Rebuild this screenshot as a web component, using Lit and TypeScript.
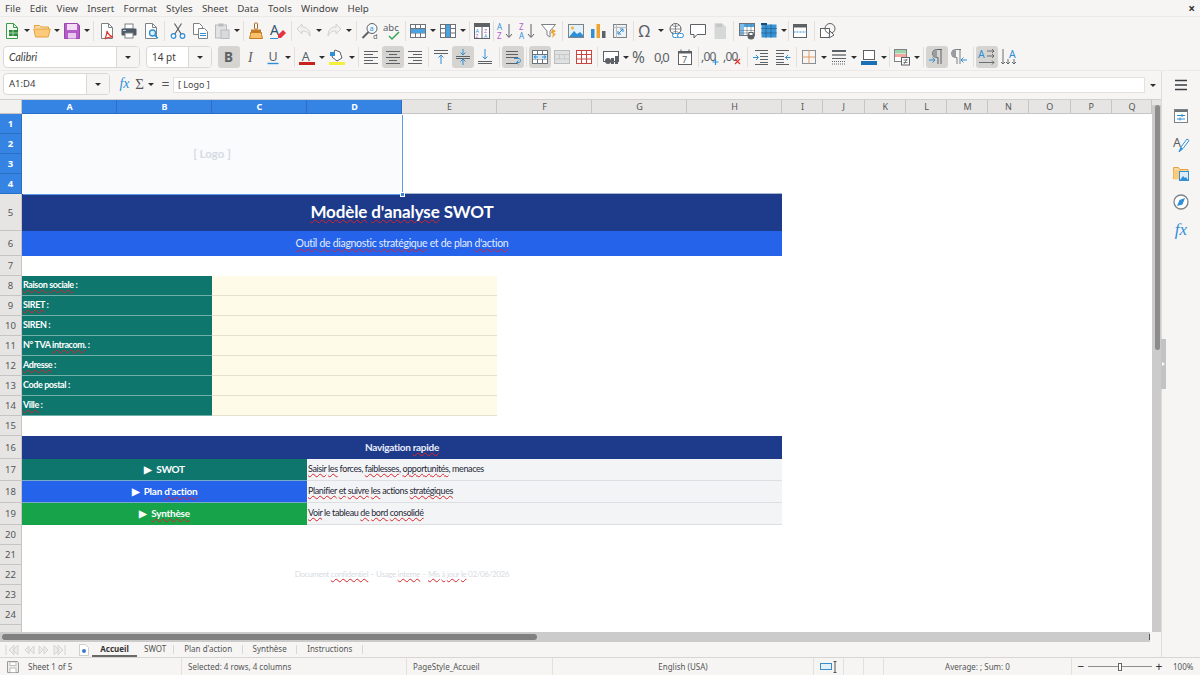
import { LitElement, css, html, svg, TemplateResult } from "lit";
import { customElement } from "lit/decorators.js";

const G = "#5c6166";
const B = "#2f8fd6";
const L = "#b9bcbf";
const doc = svg`<path d="M3.5 1.5h7l4 4v11h-11z" fill="#fff" stroke="#7d8286"/><path d="M10.5 1.5v4h4" fill="none" stroke="#7d8286"/>`;
const lines = (ys: number[], x1: number, x2: number, c = G) =>
  ys.map((y) => svg`<path d="M${x1} ${y}.5H${x2}" stroke=${c}/>`);
const tbl = (c: string, head = "#fff") => svg`<rect x="1.5" y="2.5" width="15" height="13" fill=${head} stroke=${c}/><path d="M1.5 6.5h15M1.5 11h15M6.5 2.5v13M11.5 2.5v13" stroke=${c} fill="none"/>`;

const icons: Record<string, TemplateResult> = {
  new: svg`<path d="M3.5 1.5h7l4 4v11h-11z" fill="#f3faf3" stroke="#3d9a4b"/><path d="M10.5 1.5v4h4" fill="none" stroke="#3d9a4b"/><rect x="6" y="8" width="9" height="6" fill="#2e8b3d"/><path d="M6 11h9M10 8v6" stroke="#bfe3c4" stroke-width=".8"/>`,
  open: svg`<path d="M1.5 6V3.5h5L8 5h7.5v2" fill="#fcd9a0" stroke="#e5a33c"/><path d="M.8 7h16.4l-2 8H2.5z" fill="#fdca7c" stroke="#e5a33c"/>`,
  save: svg`<path d="M1.5 1.5h13l2 2v13h-15z" fill="#b45cc8" stroke="#9a46ae"/><rect x="4" y="2" width="10" height="6" fill="#f2dcf6"/><rect x="5" y="11" width="8" height="5.5" fill="#e9c9ef"/>`,
  pdf: svg`${doc}<path d="M9 9c1 3 3 5 6 6-3 0-6 0-8 2 1-3 2-5 2-8z" fill="none" stroke="#e0362c" stroke-width="1.2"/>`,
  print: svg`<rect x="5" y="2" width="8" height="5" fill="#fff" stroke="#7d8286"/><rect x="1.5" y="6.5" width="15" height="7" rx="1" fill="#4f5b66"/><rect x="5" y="11" width="8" height="5" fill="#fff" stroke="#7d8286"/><rect x="3" y="8" width="3" height="1" fill="#b7d6ee"/>`,
  preview: svg`${doc}<circle cx="10.5" cy="11" r="3" fill="#dff0fb" stroke=${B} stroke-width="1.3"/><path d="M12.8 13.2l3 3" stroke=${B} stroke-width="1.6"/>`,
  cut: svg`<circle cx="4.5" cy="14" r="2.3" fill="none" stroke=${B} stroke-width="1.2"/><circle cx="13.5" cy="14" r="2.3" fill="none" stroke=${B} stroke-width="1.2"/><path d="M5.8 12L12.5 1.5M12.2 12L5.5 1.5" stroke=${G} stroke-width="1.2" fill="none"/>`,
  copy: svg`<path d="M2.5 1.5h6l3 3v8h-9z" fill="#fff" stroke="#7d8286"/><path d="M7.5 6.5h6l3 3v7h-9z" fill="#fff" stroke="#7d8286"/>${lines([11, 13], 9, 15, B)}`,
  paste: svg`<rect x="2.5" y="3" width="11" height="13" fill="#e2e3e3" stroke=${L}/><rect x="5.5" y="1.5" width="5" height="3" fill=${L}/><rect x="8" y="8" width="8" height="8.5" fill="#d9dadb" stroke=${L}/>`,
  clone: svg`<rect x="7.5" y="1" width="3" height="6" rx="1" fill="#fff" stroke="#a5651d"/><path d="M4 7.5h10v3H4z" fill="#c47b26"/><path d="M3.5 10.5h11v2l1 4h-13l1-4z" fill="#f7c069" stroke="#c47b26"/>`,
  clear: svg`<text x="1" y="13" class="t" font-size="14" fill="#31556f">A</text><path d="M9 13l5-5 3 3-5 5H9z" fill="#e5333f"/><path d="M1 16.5h8" stroke=${B}/>`,
  undo: svg`<path d="M7 2L2 7l5 5V9c4 0 6 1 8 5 0-6-3-9-8-9z" fill="#f1f1f0" stroke="#cfd0d0"/>`,
  redo: svg`<path d="M11 2l5 5-5 5V9c-4 0-6 1-8 5 0-6 3-9 8-9z" fill="#f1f1f0" stroke="#cfd0d0"/>`,
  find: svg`<circle cx="11" cy="6.5" r="5" fill="#f4fafe" stroke=${G}/><path d="M7.5 10L1.5 16" stroke=${G} stroke-width="2"/><text x="8.6" y="9" class="t" font-size="7.5" fill=${B}>a</text><text x="12" y="17" class="t" font-size="7.500" fill=${G}>d</text>`,
  spell: svg`<text x="0" y="9" class="t" font-size="9.5" fill=${G}>abc</text><path d="M6 14l3 3 7-7" fill="none" stroke="#36a852" stroke-width="1.5"/>`,
  rows: svg`${tbl("#6c7278")}<rect x="2" y="7" width="14" height="4" fill="#4aa3e0"/>`,
  cols: svg`${tbl("#6c7278")}<rect x="7" y="3" width="4" height="12" fill="#4aa3e0"/>`,
  sort: svg`<rect x="1.5" y="1.5" width="15" height="15" fill="#fff" stroke=${G}/><rect x="2" y="2" width="14" height="3" fill=${G}/><path d="M9 2v14" stroke=${G}/><text x="2.500" y="10.500" class="t" font-size="5.500" fill=${B}>A</text><text x="2.500" y="15.500" class="t" font-size="5" fill="#b65ec9">Z</text><text x="11" y="10.500" class="t" font-size="5.500" fill="#b65ec9">Z</text><text x="11" y="15.500" class="t" font-size="5" fill=${B}>A</text>`,
  asc: svg`<text x="1" y="8" class="t" font-size="8" fill=${B}>A</text><text x="1" y="16.5" class="t" font-size="8" fill="#b65ec9">Z</text><path d="M13 2v13M10 12l3 3.5 3-3.5" fill="none" stroke=${G}/>`,
  desc: svg`<text x="1" y="8" class="t" font-size="8" fill="#b65ec9">Z</text><text x="1" y="16.5" class="t" font-size="8" fill=${B}>A</text><path d="M13 2v13M10 12l3 3.5 3-3.5" fill="none" stroke=${G}/>`,
  filter: svg`<path d="M1.5 2.5h14L10 9v6l-3-2V9z" fill="#fff" stroke="#7d8286"/><path d="M12 7l4 2-3 2 3 1-4 4 1-4-2-1z" fill="#f0a22e"/>`,
  image: svg`<rect x="1.5" y="2.5" width="15" height="13" fill="#e2f0fa" stroke="#7d8286"/><circle cx="5.5" cy="6" r="1.5" fill="#f3b13c"/><path d="M2 15l5-6 3 3 3-2 3 3v2z" fill=${B}/>`,
  chart: svg`<rect x="2" y="7" width="3.5" height="9" fill=${B}/><rect x="7.5" y="2" width="3.5" height="14" fill="#f0a22e"/><rect x="13" y="9" width="3.5" height="7" fill=${G}/>`,
  pivot: svg`<rect x="2.5" y="2.5" width="13" height="13" fill="#eef1f3" stroke="#7d8286"/><path d="M2.5 5.5h13M5.5 2.5v13" stroke=${L}/><path d="M7 12l5-5M12 7h-3M12 7v3M7 12h3M7 12V9" stroke=${B} fill="none"/>`,
  omega: svg`<text x="1.500" y="15" class="t" font-size="16" fill=${G}>Ω</text>`,
  link: svg`<circle cx="8.5" cy="7" r="5.5" fill="#fff" stroke=${G}/><path d="M3 7h11M8.5 1.5v11M5 3c2 2 5 2 7 0M5 11c2-2 5-2 7 0" stroke=${G} stroke-width=".7" fill="none"/><rect x="5.5" y="11.5" width="6" height="4" rx="2" fill="#fff" stroke=${B}/><rect x="10.5" y="11.5" width="6" height="4" rx="2" fill="#fff" stroke=${B}/>`,
  comment: svg`<path d="M1.5 2.5h15v10H8l-3 3.5v-3.5H1.5z" fill="#fff" stroke=${G}/>`,
  headers: svg`<path d="M4 1.5h7l3.5 3.5v11.5H4z" fill="#d6d7d7" stroke="#d6d7d7"/><rect x="5" y="2" width="6" height="3" fill="#c4c5c5"/>`,
  freeze: svg`<rect x="1.5" y="1.5" width="15" height="12" fill="#fff" stroke="#6c7278"/><rect x="2" y="2" width="14" height="3" fill="#4aa3e0"/><rect x="2" y="2" width="4" height="11" fill="#7fbde8"/><path d="M2 8.5h14M2 11h14M9 2v11M13 2v11" stroke="#6c7278" stroke-width=".6"/><circle cx="13" cy="14" r="3.500" fill=${G}/><rect x="11" y="10.500" width="4" height="3" fill="#fff" stroke=${G}/>`,
  split: svg`<rect x="1.5" y="2.5" width="15" height="13" fill="#3b93d3"/><path d="M1.5 6.5h15M1.5 11h15M6 2.5v13M11 2.5v13" stroke="#174f78" stroke-dasharray="1 1"/><rect x="1" y="1" width="6" height="2" fill="#174f78"/>`,
  pane: svg`<rect x="2.5" y="2.5" width="13" height="13" fill="#fff" stroke=${G}/><rect x="3" y="3" width="12" height="2.5" fill=${G}/><path d="M2.5 10h13" stroke=${B} stroke-dasharray="2 1"/>`,
  shapes: svg`<rect x="1.5" y="6.5" width="9" height="9" fill="#fff" stroke=${G}/><circle cx="11" cy="6.5" r="5" fill="none" stroke=${G}/><path d="M11 9l4 4-5 3z" fill="#fff" stroke=${G}/>`,
  bold: svg`<text x="4" y="14" class="t" font-size="13.500" font-weight="700" fill=${G}>B</text>`,
  italic: svg`<text x="6" y="14" class="s" font-size="14" font-style="italic" fill=${G}>I</text>`,
  under: svg`<text x="4.5" y="13" class="t" font-size="12.500" fill=${G}>U</text><path d="M3.5 15.5h11" stroke=${B} stroke-width="1.4"/>`,
  fcolor: svg`<text x="3.8" y="12.5" class="t" font-size="12.500" fill=${G}>A</text><rect x="1" y="14" width="16" height="3" fill="#c9211e"/>`,
  hcolor: svg`<rect x="1" y="14" width="16" height="3" fill="#f5ee3d"/><path d="M7 2l5 2 2 6-5 3-5-4z" fill="#fff" stroke=${G}/><rect x="2" y="4" width="5" height="4" fill=${B}/>`,
  left: svg`${lines([3, 9, 15], 2, 16)}${lines([6, 12], 2, 11)}`,
  center: svg`${lines([3, 9, 15], 2, 16)}${lines([6, 12], 5, 13)}`,
  right: svg`${lines([3, 9, 15], 2, 16)}${lines([6, 12], 7, 16)}`,
  vtop: svg`${lines([2, 5], 2, 16)}<path d="M9 16V7M6.5 9.5L9 7l2.5 2.5" fill="none" stroke=${B}/>`,
  vmid: svg`${lines([8, 10], 2, 16)}<path d="M9 1v6M6.5 4.5L9 7l2.5-2.5M9 17v-6M6.5 13.5L9 11l2.5 2.5" fill="none" stroke=${B}/>`,
  vbot: svg`${lines([13, 15], 2, 16)}<path d="M9 1v10M6.5 8.5L9 11l2.5-2.5" fill="none" stroke=${B}/>`,
  wrap: svg`${lines([3, 6, 9, 15], 2, 14)}<path d="M10 10.5h5c2 0 2 4 0 4h-2M14.5 12.5L12.5 14.5l2 2" fill="none" stroke=${B}/>`,
  merge: svg`${tbl("#6c7278")}<rect x="2" y="7" width="14" height="4" fill="#cfe6f7"/><path d="M3 9h4M15 9h-4M5 7.5L3 9l2 1.5M13 7.5l2 1.5-2 1.5" fill="none" stroke=${B}/>`,
  mergeOff: svg`<rect x="1.5" y="2.5" width="15" height="13" fill="#e0e1e1" stroke=${L}/><path d="M1.5 6.5h15M1.5 11h15M6.5 6.5v4.5M11.5 6.5v4.5" stroke="#c8c9c9"/>`,
  split2: svg`${tbl("#c9453f")}`,
  numfmt: svg`<rect x="1.5" y="3.5" width="15" height="10" fill="#fff" stroke=${G}/><circle cx="6" cy="13" r="3" fill=${G}/><rect x="9" y="10" width="3" height="6" fill=${G}/><rect x="13" y="8" width="3" height="8" fill=${G}/>`,
  percent: svg`<text x="0" y="15" class="t" font-size="15.500" fill=${G}>%</text>`,
  dec: svg`<text x="0" y="14" class="t" font-size="13" letter-spacing="-1.300" fill=${G}>0,0</text>`,
  date: svg`<rect x="2.5" y="3.5" width="13" height="13" fill="#fff" stroke=${G}/><rect x="2.5" y="3.5" width="13" height="2" fill=${G}/><path d="M5 1.5v3M13 1.5v3" stroke=${G}/><text x="6" y="15" class="t" font-size="9" fill=${G}>7</text>`,
  addd: svg`<text x="-1" y="13" class="t" font-size="12" letter-spacing="-.800" fill=${G}>,00</text><path d="M13.5 11v6M10.5 14h6" stroke=${B} stroke-width="1.2"/>`,
  deld: svg`<text x="-1" y="13" class="t" font-size="12" letter-spacing="-.800" fill=${G}>,00</text><path d="M11 11l5 5M16 11l-5 5" stroke="#e0362c" stroke-width="1.2"/>`,
  indent: svg`${lines([2, 16], 3, 16)}${lines([5, 8, 11, 14], 8, 16)}<path d="M1 9.5h5M4 7l2.5 2.5L4 12" fill="none" stroke=${B}/>`,
  outdent: svg`${lines([2, 16], 2, 15)}${lines([5, 8, 11, 14], 2, 10)}<path d="M16.5 9.5h-5M14 7l-2.5 2.5L14 12" fill="none" stroke=${B}/>`,
  border: svg`<rect x="2.5" y="2.5" width="13" height="13" fill="none" stroke="#8a8f93"/><path d="M9 2.5v13M2.5 9h13" stroke="#e39a60"/>`,
  lstyle: svg`<path d="M2 3h14" stroke=${G} stroke-width="2"/><path d="M2 7h14" stroke=${G} stroke-width="1.3"/><path d="M2 10.5h14" stroke=${G}/><path d="M2 13.5h14M2 16h14" stroke=${G} stroke-dasharray="1 1"/>`,
  bcolor: svg`<rect x="3.5" y="2.5" width="11" height="9" fill="#fff" stroke=${G}/><rect x="1" y="13" width="16" height="4" fill="#1b6fb5"/>`,
  cond: svg`<rect x="1.5" y="1.5" width="12" height="12" fill="#fff" stroke="#7d8286"/><rect x="2" y="2" width="11" height="3.5" fill="#9ed4aa"/><rect x="2" y="6" width="11" height="3" fill="#f3a79f"/><rect x="8.5" y="9.5" width="8" height="7.5" fill="#fff" stroke=${G}/><path d="M10.5 12h4M10.5 14.5h4M14 11l-3 5" stroke=${G} stroke-width=".8"/>`,
  ltr: svg`<path d="M14 1.5H8.5a4 4 0 000 8H10V16M13 1.5V16" fill="none" stroke=${G}/><path d="M9 1.5a4 4 0 000 8" fill="#9a9da0"/><path d="M1 12h6M4.5 9.5L7 12l-2.500 2.500" fill="none" stroke=${B}/>`,
  rtl: svg`<path d="M11 1.5H5.5a4 4 0 000 8H7V16M10 1.5V16" fill="none" stroke="#7b7e81"/><path d="M6 1.5a4 4 0 000 8" fill="#9a9da0"/><path d="M17 12h-6M13.5 9.5L11 12l2.500 2.500" fill="none" stroke=${B}/>`,
  horiz: svg`<text x="0" y="9.5" class="t" font-size="10.500" fill=${B}>A</text><path d="M9 3h7M14 1l2 2-2 2M9 8h7M14 6l2 2-2 2M1 14.5h15M14 12.5l2 2-2 2" fill="none" stroke=${G} stroke-width=".9"/>`,
  vert: svg`<text x="9" y="10" class="t" font-size="10.500" fill=${B}>A</text><path d="M3 1v15M1 14l2 2 2-2M8 11v5M6 14l2 2 2-2M14 11v5M12 14l2 2 2-2" fill="none" stroke=${G} stroke-width=".9"/>`,
  menu: svg`<path d="M3 4.5h12M3 9h12M3 13.5h12" stroke="#3a3e42" stroke-width="1.6"/>`,
  props: svg`<rect x="2.5" y="2.5" width="13" height="13" fill="#fff" stroke="#7d8286"/><rect x="3" y="3" width="12" height="2" fill="#6d7276"/><path d="M5 8.5h8M5 12h8" stroke=${B}/><path d="M10 7v3M8 10.5v3" stroke=${B}/>`,
  styles: svg`<text x="1" y="12" class="t" font-size="12.500" fill=${G}>A</text><path d="M7 17l2-5 6-8 2 1.5-6 8z" fill="#fff" stroke=${B}/><path d="M7 17l2-5 2 1.5z" fill=${B}/>`,
  gallery: svg`<path d="M1.5 15V3.5h5l1.5 2h8v2" fill="#fcd9a0" stroke="#e5a33c"/><rect x="1.5" y="6" width="9" height="9.5" fill="#fdca7c"/><rect x="7.5" y="7.5" width="9" height="9" fill="#dcedf9" stroke=${B}/><path d="M8 16l3-4 2 2 1-1 2 3z" fill=${B}/>`,
  nav: svg`<circle cx="9" cy="9" r="7" fill="#fff" stroke="#7d8286" stroke-width="1.3"/><path d="M13 5l-2.5 6.5L5 13l2.500-6z" fill=${B}/>`,
};

const ICON = (n: string, s = 18) => html`<svg width=${s} height=${s} viewBox="0 0 18 18">${icons[n]}</svg>`;

const TB1 = "new dd open dd save dd |5 pdf print preview |5 cut copy paste dd | clone clear | undo dd redo dd |6 find spell | rows dd cols dd | sort |1 asc desc filter |5 image chart pivot | omega dd link comment headers |5 freeze |0 split dd |1 pane |6 shapes".split(" ");
const TB2 = "bold* italic under dd | fcolor dd hcolor dd | left center* right | vtop vmid* vbot |6 wrap* |5 merge* mergeOff split2 |5 numfmt dd percent dec date | addd deld |6 indent outdent | border dd lstyle dd bcolor dd |3 cond dd |5 ltr* rtl |6 horiz* vert".split(" ");
const MENU = ["File", "Edit", "View", "Insert", "Format", "Styles", "Sheet", "Data", "Tools", "Window", "Help"];
const COLS = [..."ABCDEFGHIJKLMNOPQ"];
const HEIGHTS = [20, 20, 20, 20, 37, 25, 20, 20, 20, 20, 20, 20, 20, 20, 20, 23, 22, 22, 22, 20, 20, 20, 20, 20, 20];
const WIDTHS = [95, 95, 95, 95, 95, 95, 95, 95, 41, 41.500, 41.500, 41, 41, 41, 41.500, 41.500, 40];

type Cell = { span: number; cls: string; text?: string; rows?: number };
const field = (label: string): Cell[] => [
  { span: 2, cls: "label", text: label },
  { span: 3, cls: "input" },
];
const link = (cls: string, label: string, desc: string): Cell[] => [
  { span: 3, cls: `go ${cls}`, text: `▶  ${label}` },
  { span: 5, cls: "desc", text: desc },
];
// ~word~ gets the spell check underline
const ROWS: Record<number, Cell[]> = {
  1: [{ span: 4, rows: 4, cls: "logo", text: "[ Logo ]" }],
  5: [{ span: 8, cls: "title", text: "~Modèle~ ~d'analyse~ SWOT" }],
  6: [{ span: 8, cls: "sub", text: "~Outil~ ~de~ ~diagnostic~ ~stratégique~ et de plan ~d'action~" }],
  8: field("~Raison~ ~sociale~ :"),
  9: field("~SIRET~ :"),
  10: field("SIREN :"),
  11: field("N° TVA ~intracom.~ :"),
  12: field("~Adresse~ :"),
  13: field("Code postal :"),
  14: field("~Ville~ :"),
  16: [{ span: 8, cls: "nav", text: "Navigation ~rapide~" }],
  17: link("teal", "SWOT", "~Saisir~ ~les~ forces, ~faiblesses~, ~opportunités~, menaces"),
  18: link("blue", "Plan ~d'action~", "~Planifier~ ~et~ ~suivre~ ~les~ actions ~stratégiques~"),
  19: link("green", "~Synthèse~", "~Voir~ le tableau ~de~ ~bord~ ~consolidé~"),
  22: [{ span: 8, cls: "foot", text: "Document ~confidentiel~ – Usage ~interne~ – ~Mis~ ~à~ ~jour~ ~le~ 02/06/2026" }],
};
const TABS = ["Accueil", "SWOT", "Plan d'action", "Synthèse", "Instructions"];

const spell = (t = "") =>
  t.split(/(~[^~]+~)/).map((p) => (p.startsWith("~") ? html`<span class="w">${p.slice(1, -1)}</span>` : p));

@customElement("app-root")
export class AppRoot extends LitElement {
  static styles = css`
    :host {
      display: flex;
      flex-direction: column;
      width: 1200px;
      height: 675px;
      overflow: hidden;
      background: #f6f5f4;
      color: #3d3d3d;
      font-family: "Noto Sans", sans-serif;
      font-size: 10px;
    }
    svg { display: block; flex: none; overflow: visible; }
    svg .t { font-family: "Noto Sans", sans-serif; }
    svg .s { font-family: "Liberation Serif", serif; }

    .menubar { display: flex; height: 16px; align-items: center; padding-left: 5px; border-bottom: 1px solid #eceae8; }
    .menubar span { margin-right: 9.200px; font-size: 9.800px; color: #444; }
    .menubar .close { margin: 0 5px 0 auto; font-size: 12px; font-weight: 700; color: #333; }

    .tools { display: flex; align-items: center; height: 27px; padding-left: 1px; }
    .tools.second { height: 26px; padding-left: 3px; border-bottom: 1px solid #eceae8; }
    .btn { display: flex; align-items: center; justify-content: center; flex: none; width: 22px; height: 22px; border-radius: 3px; }
    .btn.on { background: #d6d4d1; }
    .dd { flex: none; width: 8px; display: flex; justify-content: center; }
    .dd::after, .arrow::after {
      content: "";
      border: 3px solid transparent;
      border-top: 3.500px solid #2e2e2e;
      border-bottom: 0;
    }
    .sep { flex: none; display: flex; justify-content: center; height: 20px; }
    .sep::after { content: ""; width: 1px; background: #e2e0dd; }

    .combo { display: flex; flex: none; height: 22px; box-sizing: border-box; background: #fff; border: 1px solid #dad8d5; border-radius: 4px; overflow: hidden; }
    .combo .val { flex: 1; padding-left: 5px; line-height: 20px; }
    .combo .arrow { width: 22px; flex: none; display: flex; align-items: center; justify-content: center; background: #f6f5f4; border-left: 1px solid #dad8d5; }
    .font { width: 137px; font-style: italic; }
    .font .val { font-family: "Lato", sans-serif; font-size: 10.500px; }
    .size { width: 66px; margin-left: 6px; margin-right: 6px; }

    .work { flex: 1; display: flex; min-height: 0; }
    .main { width: 1161px; display: flex; flex-direction: column; border-right: 1px solid #dedcd9; box-sizing: content-box; }
    .side { flex: 1; display: flex; flex-direction: column; align-items: center; padding-top: 5px; gap: 10.700px; position: relative; }
    .side .first { margin-bottom: 2px; }
    .grip { position: absolute; left: -1px; top: 268px; width: 5px; height: 50px; background: #c3c3c3; display: flex; align-items: center; }
    .grip::after { content: ""; border: 2px solid transparent; border-left: 3px solid #fff; border-right: 0; margin-left: 1px; }

    .formula { display: flex; align-items: center; height: 28px; padding: 0 0 2px 3px; box-sizing: border-box; flex: none; }
    .formula .name { width: 107px; }
    .formula .name .val { font-size: 9.500px; }
    .fbtn { flex: none; width: 15px; display: flex; justify-content: center; color: #555; }
    .fx { margin-left: 7px; font: italic 14px "Liberation Serif", serif; color: #2f8fd6; }
    .sigma { font: 15px "Liberation Serif", serif; }
    .eq { font-size: 14px; line-height: 14px; margin-left: 3px; }
    .finput { margin: 2px 0 0 0; width: 972px; height: 16px; box-sizing: border-box; background: #fff; border: 1px solid #e3e1de; font-size: 9px; line-height: 14px; padding-left: 4px; color: #444; }
    .fdrop { width: 15px; margin-top: 2px; }

    .sheetwrap { flex: none; display: flex; height: 533px; border-top: 1px solid #d0cfcd; box-sizing: border-box; background: #fff; }
    .sheet { position: relative; width: 1152px; overflow: hidden; display: grid; align-content: start; font-family: "Lato", sans-serif; }
    .corner, .ch, .rh { display: flex; align-items: center; justify-content: center; background: #e6e5e3; color: #555; font-family: "Noto Sans", sans-serif; font-size: 9px; box-sizing: border-box; border-right: 1px solid #c6c5c3; border-bottom: 1px solid #c6c5c3; }
    .corner { background: #f2f1ef; }
    .ch { padding-left: 1px; }
    .ch.sel, .rh.sel { background: #3584e4; color: #fff; font-weight: 700; border-color: #2a6fc4; }
    .rh { grid-column: 1; font-size: 9.500px; }
    .cell { display: flex; align-items: center; box-sizing: border-box; min-width: 0; white-space: pre; color: #fff; padding-bottom: 2px; }
    .w { text-decoration: underline wavy #d8232a 1px; text-underline-offset: 1px; text-decoration-skip-ink: none; }
    .logo { justify-content: center; background: #f9fbfd; color: #d5dbe3; font-weight: 700; font-size: 11.500px; box-shadow: 1px 1px 0 #5a9ae6; position: relative; z-index: 1; }
    .handle { position: absolute; right: -3px; bottom: -3px; width: 3px; height: 3px; background: #3584e4; border: 1px solid #fff; z-index: 2; }
    .title { justify-content: center; background: #1e3a8a; font-weight: 700; font-size: 17px; letter-spacing: -.12px; padding-bottom: 3px; box-shadow: 0 -1px 0 #a9b6cf; }
    .sub { justify-content: center; background: #2563eb; color: #e4edfd; font-size: 10.500px; letter-spacing: -.3px; }
    .label { background: #0f766e; font-weight: 700; font-size: 9px; letter-spacing: -.4px; padding-left: 1px; border-bottom: 1px solid #6fb0a9; }
    .input { background: #fefce8; border-bottom: 1px solid #e3e2cf; }
    .nav { justify-content: center; background: #1e3a8a; font-weight: 700; font-size: 10px; letter-spacing: -.28px; color: #eaeefa; }
    .go { justify-content: center; font-weight: 700; font-size: 10px; letter-spacing: -.25px; border-bottom: 1px solid #79a9c8; }
    .teal { background: #0f766e; }
    .blue { background: #2563eb; }
    .green { background: #16a34a; border-bottom: 0; }
    .desc { background: #f3f4f6; color: #1f2937; font-size: 9px; letter-spacing: -.4px; padding-left: 1px; border-bottom: 1px solid #dcdee1; }
    .foot { justify-content: center; color: #d8dce2; font-size: 8px; letter-spacing: -.33px; }

    .vscroll { width: 9px; flex: none; position: relative; background: #cbcbcb; }
    .vscroll::before { content: ""; position: absolute; top: 0; left: 0; right: 0; height: 5px; background: #e6e5e3; }
    .vscroll::after { content: ""; position: absolute; top: 5px; left: 3px; width: 5px; height: 245px; background: #8c8c8c; border-radius: 3px; }

    .hscroll { flex: none; height: 10px; background: #cbcbcb; position: relative; margin-right: 11px; }
    .hscroll::before { content: ""; position: absolute; left: 2px; top: 2px; width: 535px; height: 6px; border-radius: 3px; background: #808080; }
    .hscroll::after { content: ""; position: absolute; left: 1149px; top: 2px; width: 1px; height: 6px; background: #555; }

    .tabs { flex: none; display: flex; align-items: center; height: 15px; color: #555; font-size: 8px; }
    .tabnav { width: 75px; padding-left: 5px; box-sizing: border-box; flex: none; }
    .addtab { width: 17px; flex: none; display: flex; justify-content: center; }
    .tab { height: 15px; line-height: 14px; padding: 0 9.500px 0 10px; flex: none; }
    .tab.second { padding-left: 7px; padding-right: 7px; }
    .tab.on { width: 45px; padding: 0; text-align: center; font-weight: 700; color: #333; box-sizing: border-box; border-bottom: 2px solid #6a6a6a; }
    .tabrule { width: 1px; height: 9px; background: #d9d7d4; flex: none; }

    .status { flex: none; display: grid; grid-template-columns: 182px 225px 146px 261px 30px 20px 20px 188px 1fr; height: 18px; border-top: 1px solid #d8d6d3; align-items: center; font-size: 8px; color: #555; box-sizing: border-box; }
    .status > div { height: 100%; box-sizing: border-box; display: flex; align-items: center; white-space: nowrap; border-right: 1px solid #e3e1de; }
    .status .pad { padding-left: 6px; }
    .status .mid { justify-content: center; }
    .status .zoom { border: 0; padding-left: 5px; }
    .track { width: 64px; height: 1px; background: #8e8e8e; margin: 0 3px; position: relative; }
    .track::after { content: ""; position: absolute; left: 30px; top: -3px; width: 2px; height: 6px; border: 1px solid #666; background: #fff; }
    .zb { font-size: 12px; line-height: 12px; color: #333; width: 8px; text-align: center; }
    .pct { margin-left: 10px; }
  `;

  private strip(list: string[]) {
    return list.map((t) => {
      if (t === "dd") return html`<div class="dd"></div>`;
      if (t.startsWith("|")) {
        const w = t.length > 1 ? Number(t.slice(1)) : 4;
        return html`<div class="sep" style="width:${w}px"></div>`;
      }
      const on = t.endsWith("*");
      return html`<div class="btn ${on ? "on" : ""}">${ICON(on ? t.slice(0, -1) : t)}</div>`;
    });
  }

  private grid() {
    const out: TemplateResult[] = [];
    out.push(html`<div class="corner"></div>`);
    COLS.forEach((c, i) => out.push(html`<div class="ch ${i < 4 ? "sel" : ""}">${c}</div>`));
    HEIGHTS.forEach((_, i) => {
      const n = i + 1;
      // row 25 is cut by the scrollbar, its number does not show
      out.push(html`<div class="rh ${n <= 4 ? "sel" : ""}">${n < 25 ? n : ""}</div>`);
      for (const c of ROWS[n] ?? []) {
        const area = `grid-column:span ${c.span};grid-row:span ${c.rows ?? 1}`;
        out.push(html`<div class="cell ${c.cls}" style=${area}>
          <span>${spell(c.text)}</span>${c.cls === "logo" ? html`<i class="handle"></i>` : ""}
        </div>`);
      }
    });
    return out;
  }

  render() {
    const cols = `22px ${WIDTHS.map((w) => `${w}px`).join(" ")}`;
    const rows = `14px ${HEIGHTS.map((h) => `${h}px`).join(" ")}`;
    return html`
      <div class="menubar">
        ${MENU.map((m) => html`<span>${m}</span>`)}
        <span class="close">×</span>
      </div>
      <div class="tools">${this.strip(TB1)}</div>
      <div class="tools second">
        <div class="combo font"><div class="val">Calibri</div><div class="arrow"></div></div>
        <div class="combo size"><div class="val">14 pt</div><div class="arrow"></div></div>
        ${this.strip(TB2)}
      </div>
      <div class="work">
        <div class="main">
          <div class="formula">
            <div class="combo name"><div class="val">A1:D4</div><div class="arrow"></div></div>
            <div class="fbtn fx">fx</div>
            <div class="fbtn sigma">Σ</div>
            <div class="dd"></div>
            <div class="fbtn eq">=</div>
            <div class="finput">[ Logo ]</div>
            <div class="fdrop dd"></div>
          </div>
          <div class="sheetwrap">
            <div class="sheet" style="grid-template-columns:${cols};grid-template-rows:${rows}">${this.grid()}</div>
            <div class="vscroll"></div>
          </div>
          <div class="hscroll"></div>
          <div class="tabs">
            <div class="tabnav">
              <svg width="62" height="14" viewBox="0 0 62 14" fill="#ececea" stroke="#d5d4d2">
                <path d="M1 2v10M9 2L4 7l5 5zM13 2L8 7l5 5zM24 3l-4 4 4 4zM29 3l-4 4 4 4zM34 3l4 4-4 4zM39 3l4 4-4 4zM49 2l5 5-5 5zM53 2l5 5-5 5zM60 2v10" />
              </svg>
            </div>
            <div class="addtab">
              <svg width="12" height="14" viewBox="0 0 12 14">
                <path d="M1.5 1.500h6l3 3v8h-9z" fill="#fff" stroke="#d0cfcd" />
                <circle cx="6" cy="8" r="2" fill="#3a7cc4" />
              </svg>
            </div>
            ${TABS.map((t, i) => {
              const cls = i === 0 ? "on" : i === 1 ? "second" : "";
              return html`<div class="tab ${cls}">${t}</div>${i > 0 ? html`<div class="tabrule"></div>` : ""}`;
            })}
          </div>
        </div>
        <div class="side">
          <div class="grip"></div>
          <div class="first">${ICON("menu")}</div>
          ${["props", "styles", "gallery", "nav"].map((n) => ICON(n))}
          <div class="fx" style="margin:0;font-size:17px;line-height:18px">fx</div>
        </div>
      </div>
      <div class="status">
        <div class="pad">
          <svg width="14" height="14" viewBox="0 0 14 14" style="margin:0 8px 0 0">
            <path d="M1.500 1.500h10l1 1v10h-11z" fill="#eee" stroke="#9a9a9a" />
            <rect x="4" y="2" width="6" height="3.500" fill="#fff" stroke="#9a9a9a" stroke-width=".6" />
            <rect x="4" y="8" width="6" height="4.500" fill="#fff" stroke="#9a9a9a" stroke-width=".6" />
          </svg>
          Sheet 1 of 5
        </div>
        <div class="pad">Selected: 4 rows, 4 columns</div>
        <div class="pad">PageStyle_Accueil</div>
        <div class="mid">English (USA)</div>
        <div class="mid">
          <svg width="18" height="12" viewBox="0 0 18 12" fill="none">
            <rect x=".5" y="2.500" width="11" height="6" fill="#e4f0f9" stroke="#3a8cc8" />
            <path d="M15 1v10M13.500.5h3M13.500 11.500h3" stroke="#555" />
          </svg>
        </div>
        <div></div>
        <div></div>
        <div class="mid">Average: ; Sum: 0</div>
        <div class="zoom">
          <span class="zb">−</span><div class="track"></div><span class="zb">+</span><span class="pct">100%</span>
        </div>
      </div>
    `;
  }
}
